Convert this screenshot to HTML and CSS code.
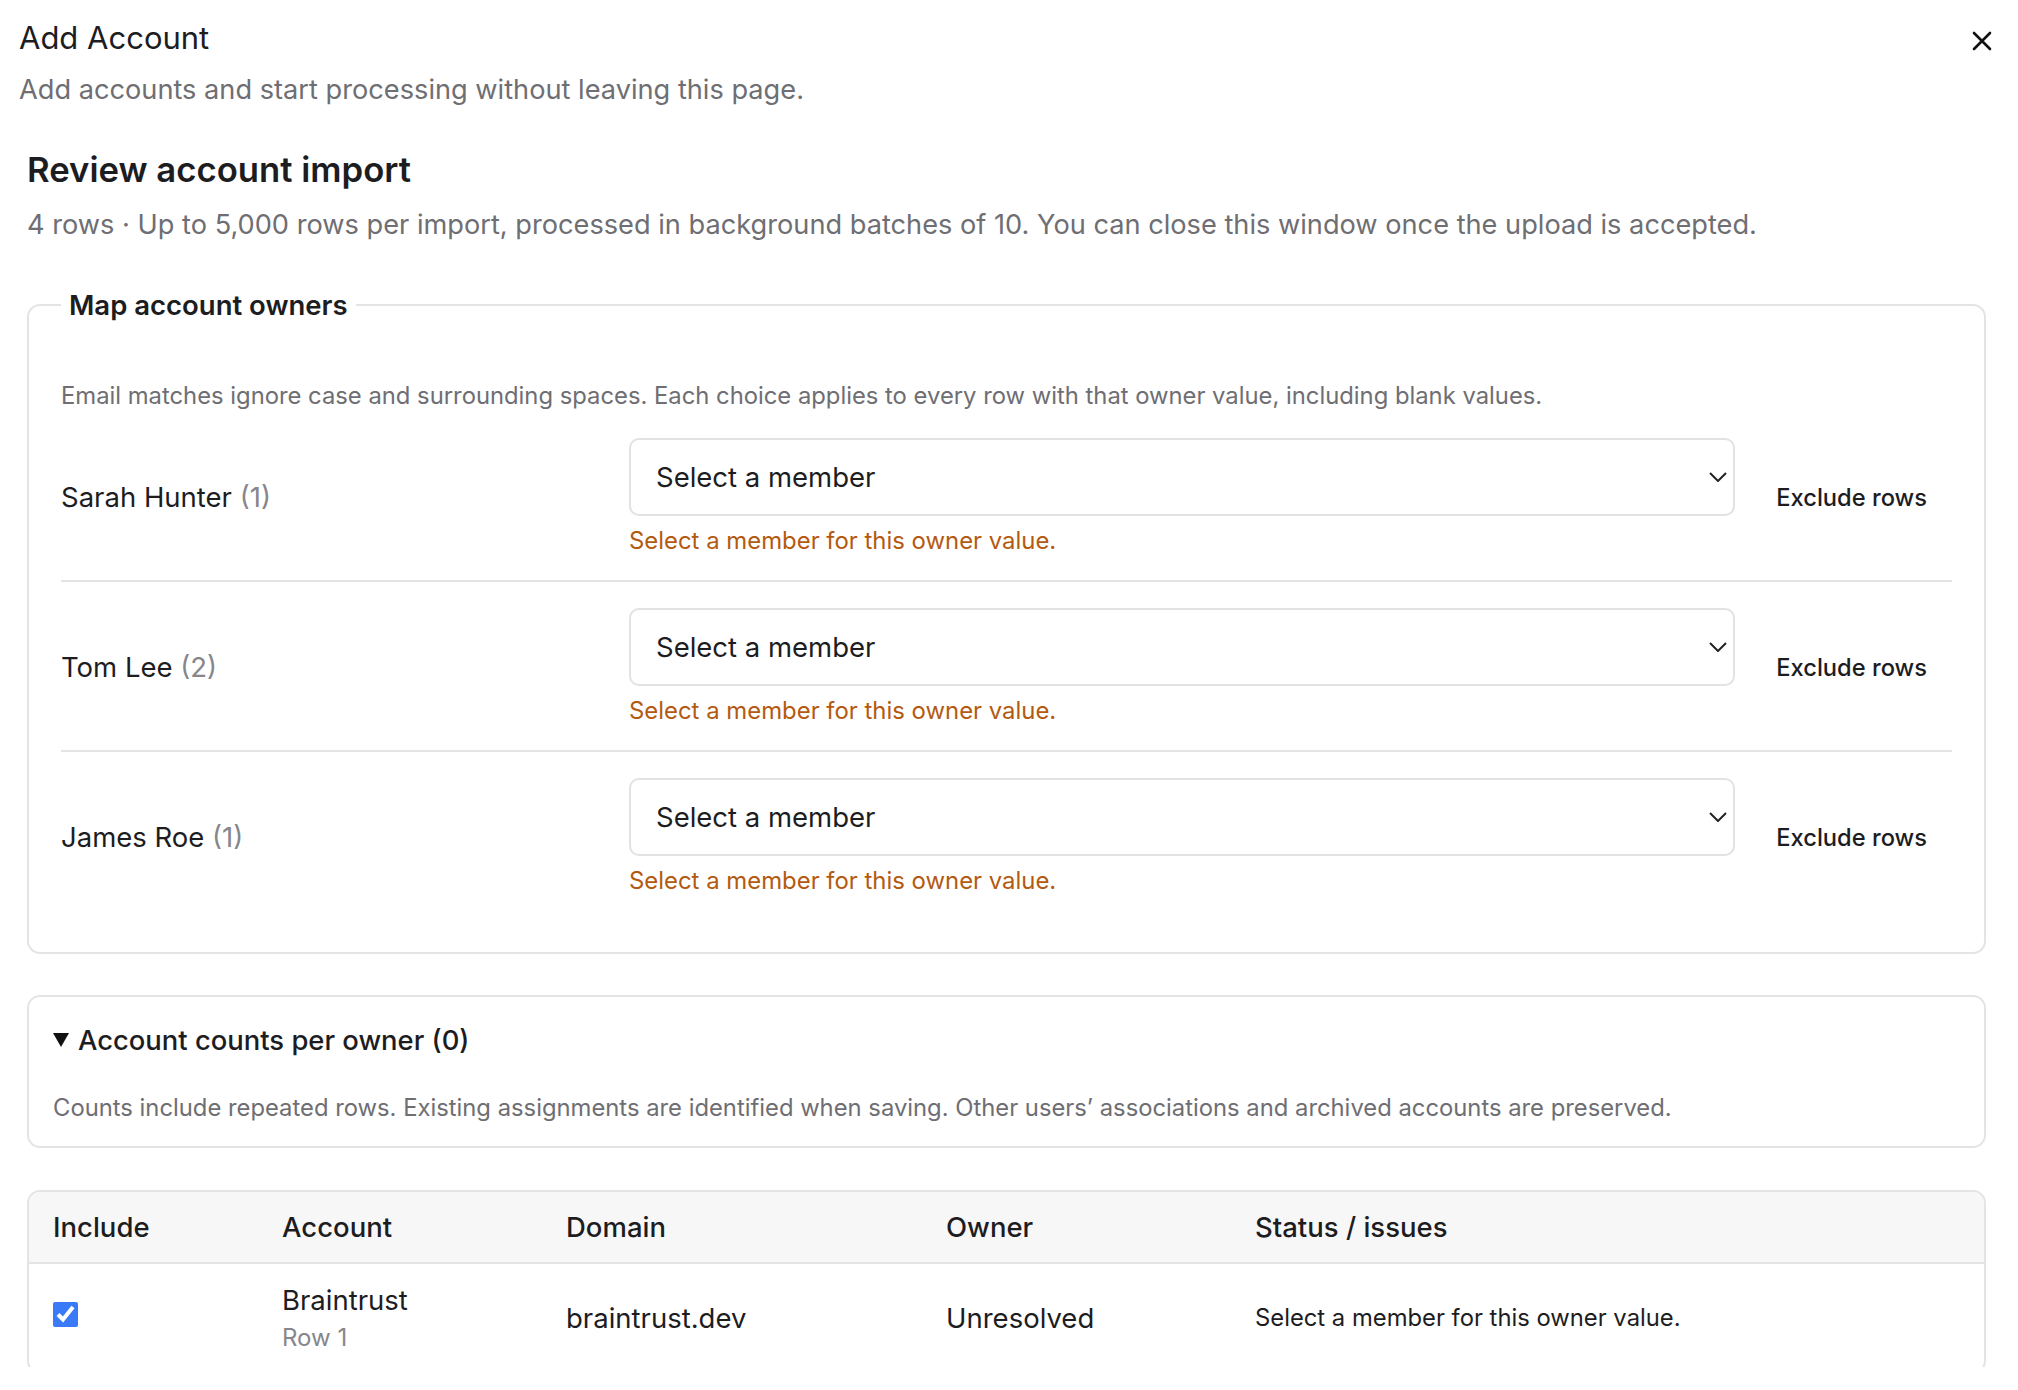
FILE: index.html
```html
<!DOCTYPE html>
<html lang="en">
<head>
    <meta charset="UTF-8">
    <meta name="viewport" content="width=device-width, initial-scale=1.0">
    <title>Add Account</title>
    <link rel="stylesheet" href="styles.css">
</head>
<body>
    <div class="dialog">
        <header class="dialog-header">
            <div>
                <h1 class="dialog-title">Add Account</h1>
                <p class="dialog-subtitle">Add accounts and start processing without leaving this page.</p>
            </div>
            <button class="close-btn" aria-label="Close">
                <svg width="20" height="20" viewBox="0 0 20 20"><path d="M2 2 L18 18 M18 2 L2 18" stroke="#111" stroke-width="2.6" stroke-linecap="round"/></svg>
            </button>
        </header>

        <div class="dialog-body">
            <h2 class="review-title">Review account import</h2>
            <p class="review-meta">4 rows · Up to 5,000 rows per import, processed in background batches of 10. You can close this window once the upload is accepted.</p>

            <fieldset class="owner-map">
                <legend>Map account owners</legend>
                <p class="hint">Email matches ignore case and surrounding spaces. Each choice applies to every row with that owner value, including blank values.</p>

                <div class="owner-row">
                    <div class="owner-name">Sarah Hunter <span class="count">(1)</span></div>
                    <div class="owner-field">
                        <div class="select-wrap">
                            <select class="member-select"><option>Select a member</option></select>
                            <svg class="chevron" width="18" height="10" viewBox="0 0 18 10"><path d="M1 1 L9 9 L17 1" fill="none" stroke="#222" stroke-width="2"/></svg>
                        </div>
                        <div class="field-error">Select a member for this owner value.</div>
                    </div>
                    <button class="exclude-btn">Exclude rows</button>
                </div>

                <div class="owner-row">
                    <div class="owner-name">Tom Lee <span class="count">(2)</span></div>
                    <div class="owner-field">
                        <div class="select-wrap">
                            <select class="member-select"><option>Select a member</option></select>
                            <svg class="chevron" width="18" height="10" viewBox="0 0 18 10"><path d="M1 1 L9 9 L17 1" fill="none" stroke="#222" stroke-width="2"/></svg>
                        </div>
                        <div class="field-error">Select a member for this owner value.</div>
                    </div>
                    <button class="exclude-btn">Exclude rows</button>
                </div>

                <div class="owner-row">
                    <div class="owner-name">James Roe <span class="count">(1)</span></div>
                    <div class="owner-field">
                        <div class="select-wrap">
                            <select class="member-select"><option>Select a member</option></select>
                            <svg class="chevron" width="18" height="10" viewBox="0 0 18 10"><path d="M1 1 L9 9 L17 1" fill="none" stroke="#222" stroke-width="2"/></svg>
                        </div>
                        <div class="field-error">Select a member for this owner value.</div>
                    </div>
                    <button class="exclude-btn">Exclude rows</button>
                </div>
            </fieldset>

            <details class="counts" open>
                <summary>
                    <svg class="caret" width="16" height="14" viewBox="0 0 16 14"><path d="M0 0 H16 L8 14 Z" fill="#111"/></svg>
                    Account counts per owner (0)
                </summary>
                <p class="hint">Counts include repeated rows. Existing assignments are identified when saving. Other users’ associations and archived accounts are preserved.</p>
            </details>

            <div class="table-card">
                <table class="import-table">
                    <thead>
                        <tr>
                            <th class="col-include">Include</th>
                            <th class="col-account">Account</th>
                            <th class="col-domain">Domain</th>
                            <th class="col-owner">Owner</th>
                            <th>Status / issues</th>
                        </tr>
                    </thead>
                    <tbody>
                        <tr>
                            <td class="cell-include"><input type="checkbox" checked></td>
                            <td>
                                <div class="account-name">Braintrust</div>
                                <div class="account-row">Row 1</div>
                            </td>
                            <td>braintrust.dev</td>
                            <td>Unresolved</td>
                            <td class="cell-status">Select a member for this owner value.</td>
                        </tr>
                    </tbody>
                </table>
            </div>
        </div>
    </div>
</body>
</html>
```

FILE: styles.css
```css
:root {
    --text: #1d1d1f;
    --muted: #6e6e73;
    --faint: #86868b;
    --border: #e4e4e6;
    --error: #b45a10;
    --accent: #3a7af6;
}

* {
    box-sizing: border-box;
}

html, body {
    margin: 0;
    height: 100%;
    overflow: hidden;
}

body {
    font-family: Inter, "Noto Sans", sans-serif;
    color: var(--text);
    background: #fff;
}

.dialog {
    display: flex;
    flex-direction: column;
    height: 100vh;
    padding: 20px 16px 23px 19px;
}

.dialog-header {
    display: flex;
    justify-content: space-between;
    align-items: flex-start;
}

.dialog-title {
    margin: 0;
    font-size: 31px;
    line-height: 36px;
    font-weight: 400;
}

.dialog-subtitle {
    margin: 18px 0 0;
    font-size: 27.2px;
    line-height: 32px;
    color: var(--muted);
}

.close-btn {
    width: 40px;
    height: 40px;
    margin-top: 1px;
    padding: 0;
    border: none;
    background: none;
    display: flex;
    align-items: center;
    justify-content: center;
    cursor: pointer;
}

.dialog-body {
    flex: 1;
    overflow: hidden;
    padding: 0 16px 0 8px;
}

.review-title {
    margin: 42px 0 0;
    font-size: 34.7px;
    line-height: 42px;
    font-weight: 600;
}

.review-meta {
    margin: 18px 0 0;
    font-size: 27.2px;
    line-height: 34px;
    color: var(--muted);
}

.owner-map {
    margin: 45px 0 0;
    padding: 26px 32px 32px;
    border: 2px solid var(--border);
    border-radius: 13px;
    min-width: 0;
}

.owner-map legend {
    padding: 0 8px;
    font-size: 27.5px;
    line-height: 36px;
    font-weight: 600;
}

.hint {
    margin: 31px 0 0;
    font-size: 23.8px;
    line-height: 32px;
    color: var(--muted);
}

.owner-row {
    display: grid;
    grid-template-columns: 552px 1fr auto;
    column-gap: 16px;
    align-items: center;
    padding: 26px 0 24px;
    border-bottom: 2px solid var(--border);
}

.owner-row:last-child {
    border-bottom: none;
}

.owner-name {
    font-size: 27.5px;
    line-height: 34px;
}

.owner-name .count {
    color: var(--faint);
}

.select-wrap {
    position: relative;
}

.member-select {
    display: block;
    width: 100%;
    height: 78px;
    padding: 0 50px 0 25px;
    border: 2px solid #e2e2e4;
    border-radius: 10px;
    background: #fff;
    font-family: inherit;
    font-size: 27.5px;
    color: var(--text);
    appearance: none;
    -webkit-appearance: none;
}

.chevron {
    position: absolute;
    right: 8px;
    top: 34px;
    pointer-events: none;
}

.field-error {
    margin-top: 10px;
    font-size: 23.9px;
    line-height: 30px;
    color: var(--error);
}

.exclude-btn {
    padding: 0 25px;
    border: none;
    background: none;
    font-family: inherit;
    font-size: 23.7px;
    font-weight: 500;
    color: var(--text);
    cursor: pointer;
}

.counts {
    margin-top: 41px;
    padding: 25px 24px 22px;
    border: 2px solid var(--border);
    border-radius: 13px;
}

.counts summary {
    list-style: none;
    display: flex;
    align-items: center;
    gap: 9px;
    font-size: 27.4px;
    line-height: 36px;
    font-weight: 500;
    cursor: pointer;
}

.counts summary::-webkit-details-marker {
    display: none;
}

.counts .hint {
    margin-top: 34px;
}

.table-card {
    margin-top: 42px;
    border: 2px solid var(--border);
    border-radius: 13px;
    overflow: hidden;
}

.import-table {
    width: 100%;
    border-collapse: collapse;
    table-layout: fixed;
}

.import-table th {
    padding: 18px 24px;
    background: #f7f7f8;
    border-bottom: 2px solid var(--border);
    text-align: left;
    font-size: 27.5px;
    line-height: 34px;
    font-weight: 500;
}

.col-include { width: 229px; }
.col-account { width: 284px; }
.col-domain { width: 380px; }
.col-owner { width: 309px; }

.import-table td {
    padding: 19px 24px;
    font-size: 27.5px;
    line-height: 34px;
    vertical-align: middle;
}

.import-table td.cell-include {
    vertical-align: top;
    padding-top: 36px;
}

.cell-include input {
    width: 25px;
    height: 25px;
    margin: 0;
    accent-color: var(--accent);
}

.account-row {
    margin-top: 6px;
    font-size: 24px;
    line-height: 30px;
    color: var(--faint);
}

.import-table td.cell-status {
    font-size: 23.8px;
}
```
